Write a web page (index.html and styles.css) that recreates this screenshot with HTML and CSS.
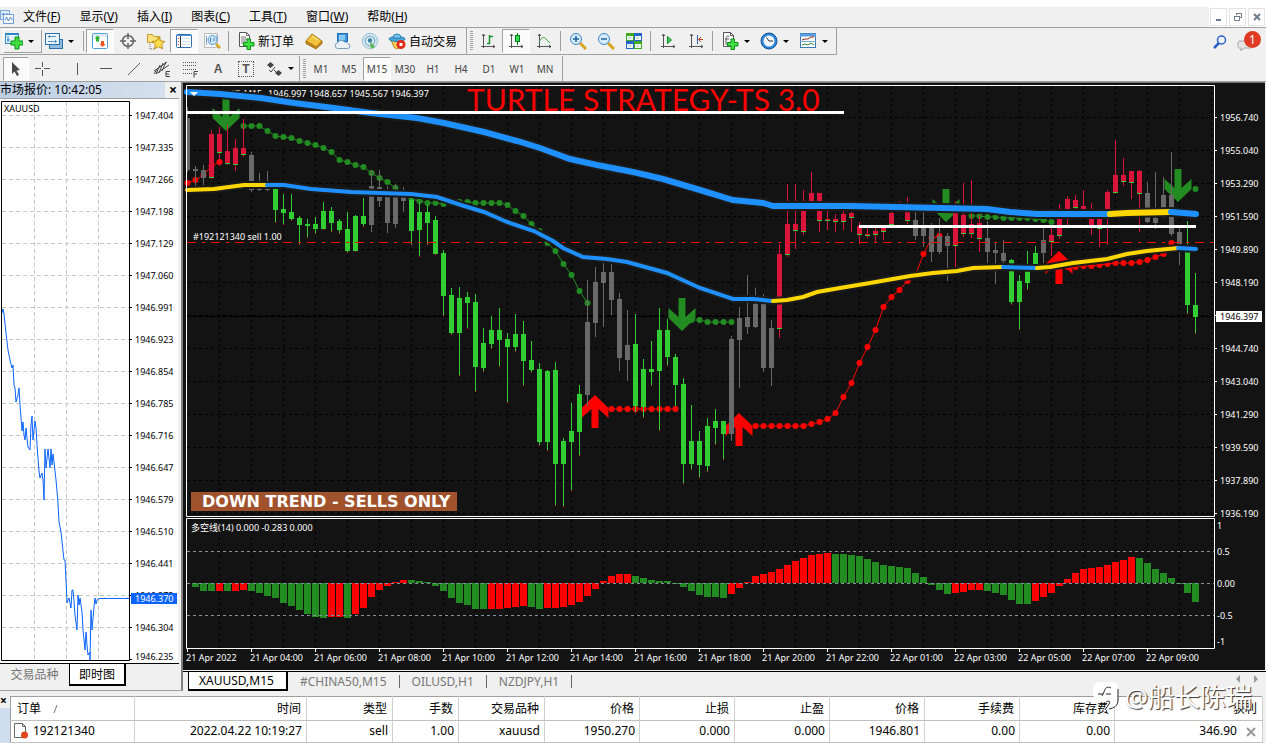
FILE: index.html
```html
<!DOCTYPE html>
<html lang="zh-CN">
  <head>
    <meta charset="utf-8">
    <meta name="viewport" content="width=device-width, initial-scale=1.0">
    <title>XAUUSD,M15</title>
    <link rel="stylesheet" href="styles.css">
  </head>

  <body>
    <header class="menubar">
      <svg class="app-icon" viewBox="0 0 14 14"><rect x="0.5" y="0.5" width="9" height="9" fill="#dbe9fb" stroke="#7fa9dc"/><path d="M2 5l1.500-2 2 3 2-3" fill="none" stroke="#5b8fd0"/><rect x="3.5" y="4.5" width="10" height="9" fill="#fff" stroke="#6f9fdc"/><path d="M5 10l1.500-3 2 4 2-4 2 3" fill="none" stroke="#4a80c8"/></svg>
      <nav class="menu">
        <button>文件(<u>F</u>)</button>
        <button>显示(<u>V</u>)</button>
        <button>插入(<u>I</u>)</button>
        <button>图表(<u>C</u>)</button>
        <button>工具(<u>T</u>)</button>
        <button>窗口(<u>W</u>)</button>
        <button>帮助(<u>H</u>)</button>
      </nav>
      <div class="window-buttons">
        <button aria-label="最小化"><svg viewBox="0 0 10 10"><path d="M2 8h5" stroke="#6d7b8c" stroke-width="2"/></svg></button>
        <button aria-label="还原"><svg viewBox="0 0 10 10"><path d="M3.500 3V1.500h5v4H7M3 1.500h6M1.500 4.500h5v4h-5zM1 4.500h6" fill="none" stroke="#6d7b8c"/></svg></button>
        <button aria-label="关闭"><svg viewBox="0 0 10 10"><path d="M2 2l6 6M8 2L2 8" stroke="#6d7b8c" stroke-width="2"/></svg></button>
      </div>
    </header>

    <div class="row">
      <div class="toolbar main-tools">
        <button class="tool drop raised" aria-label="新图表"><svg viewBox="0 0 18 18"><rect x="0.500" y="1.500" width="13" height="10" fill="#e6f2fc" stroke="#2f86c8"/><path d="M0 2.500h14M3 4v6M2 8h3" stroke="#2f86c8"/><path d="M10 5h4v4h4v4h-4v4h-4v-4H6V9h4z" fill="#3fe03f" stroke="#0a8f1a"/></svg><i></i></button>
        <button class="tool drop profiles" aria-label="配置文件"><svg viewBox="0 0 18 18"><rect x="4.500" y="7.500" width="13" height="9" fill="#8fbce0" stroke="#2c6ea6"/><rect x="0.500" y="1.500" width="14" height="11" fill="#eaf4fb" stroke="#2c6ea6"/><path d="M3 4.500h8M3 9.500h9M4.500 3v3M10.500 8v3" stroke="#5b93bf"/></svg><i></i></button>
        <span class="sep"></span>
        <button class="tool pressed" aria-label="市场报价"><svg viewBox="0 0 18 18"><rect x="1.500" y="1.500" width="15" height="15" rx="1" fill="#fff" stroke="#4f9fd8"/><path d="M2 3.500h14" stroke="#cfe4f4" stroke-width="2"/><path d="M6.500 3.500l3 3H8v3H5v-3H3.500z" fill="#2bb52b"/><path d="M11.500 15l3-3H13V9h-3v3H8.500z" fill="#f0541e"/></svg></button>
        <button class="tool" aria-label="数据窗口"><svg viewBox="0 0 18 18"><circle cx="9" cy="9" r="5.500" fill="none" stroke="#666" stroke-width="1.500"/><path d="M9 1v6M9 11v6M1 9h6M11 9h6" stroke="#666" stroke-width="1.500"/></svg></button>
        <button class="tool" aria-label="导航"><svg viewBox="0 0 18 18"><path d="M0.500 2.500h5l1.500 2h6v6H0.500z" fill="#ffe27a" stroke="#c39a2e"/><path d="M3 12v5h5" fill="none" stroke="#666" stroke-dasharray="1 1"/><path d="M11.500 5l2 4 4.300.5-3.200 3 .9 4.300-4-2.200-4 2.200.9-4.300-3.200-3 4.300-.5z" fill="#ffdf4d" stroke="#c08a12"/></svg></button>
        <button class="tool pressed" aria-label="终端"><svg viewBox="0 0 18 18"><rect x="1.500" y="2.500" width="15" height="13" rx="1" fill="#fff" stroke="#2f6fb4"/><path d="M2 3.500h14" stroke="#4f90d0"/><path d="M5.500 4v11" stroke="#333"/><path d="M7 6.500h8M7 9.500h8M7 12.500h8" stroke="#d4e3f4"/><path d="M3 6.500h1M3 9.500h1M3 12.500h1" stroke="#d33"/></svg></button>
        <button class="tool" aria-label="策略测试"><svg viewBox="0 0 18 18"><path d="M1.500 1.500h13v14h-13z" fill="#f8f8f8" stroke="#bbb"/><path d="M3.500 4v9M14 3v6" stroke="#7aa0d0"/><circle cx="9.500" cy="8" r="4.500" fill="#c8e4f7" stroke="#5a9bd0"/><path d="M7.500 6v4M11 6v3" stroke="#4a80c8"/><path d="M13 12l4 4" stroke="#d9a520" stroke-width="2.500"/></svg></button>
        <span class="sep"></span>
        <button class="tool text-tool order" aria-label="新订单"><svg viewBox="0 0 18 18"><path d="M2.500 0.500h7l3 3v11h-10z" fill="#fff" stroke="#555"/><path d="M9.500 0.500v3h3M4 5h5M4 7h7M4 9h5M4 11h4" fill="none" stroke="#777"/><path d="M10 7h3.500v3.500H17V14h-3.500v3.500H10V14H6.500v-3.500H10z" fill="#3fe03f" stroke="#0a8f1a"/></svg>新订单</button>
        <button class="tool" aria-label="MetaEditor"><svg viewBox="0 0 18 18"><path d="M7 2l10 7-6 6L1 9z" fill="#f3c33c" stroke="#a87412"/><path d="M1 9v2.500l10 5.500 6-5.500V9l-6 6z" fill="#c88a1c" stroke="#a87412"/><path d="M7 4l6 4" stroke="#fff0a8"/></svg></button>
        <button class="tool" aria-label="MQL5"><svg viewBox="0 0 18 18"><rect x="4.500" y="1.500" width="10" height="8" fill="#3b95e0" stroke="#1f6db4"/><path d="M6 3h6v5H6z" fill="#8cc8f5"/><path d="M4.500 16.500a2.800 2.800 0 010-5.500 4 4 0 017-1 3 3 0 013 1.500 2.500 2.500 0 010 5z" fill="#eaf2f9" stroke="#7d9ab8"/></svg></button>
        <button class="tool" aria-label="信号"><svg viewBox="0 0 18 18"><circle cx="9" cy="9" r="7.500" fill="#eef4f6" stroke="#a8cbdc" stroke-width="1.500"/><circle cx="9" cy="9" r="4.800" fill="#e2f0f5" stroke="#7fb2d0" stroke-width="1.500"/><circle cx="9" cy="8.500" r="2.200" fill="#3a7fa8"/><path d="M9 9l1 8 4-2z" fill="#57b84e"/></svg></button>
        <button class="tool text-tool auto" aria-label="自动交易"><svg viewBox="0 0 18 18"><path d="M3 8h11l-1 6a4 4 0 01-7 1z" fill="#f4cf55" stroke="#b98a1c"/><ellipse cx="9" cy="7" rx="8" ry="2.500" fill="#4aa5d8" stroke="#2a7fae"/><path d="M5 6a4 4 0 018 0z" fill="#7cc8ee" stroke="#2a7fae"/><circle cx="13" cy="12.500" r="4.500" fill="#e02b18"/><rect x="11.500" y="11" width="3" height="3" fill="#fff"/></svg>自动交易</button>
      </div>
      <div class="toolbar chart-tools">
        <span class="grip"></span>
        <button class="tool" aria-label="柱状图"><svg viewBox="0 0 18 18"><path d="M4.500 2v14M2 14.500h14M3 4l1.500-2L6 4M14 13l2 1.500-2 1.500" fill="none" stroke="#555"/><path d="M10.500 3v9M8 11.500h3M11 4.500h3" stroke="#16962a" stroke-width="1.500"/></svg></button>
        <button class="tool pressed" aria-label="阴阳烛"><svg viewBox="0 0 18 18"><path d="M4.500 2v14M2 14.500h14M3 4l1.500-2L6 4M14 13l2 1.500-2 1.500" fill="none" stroke="#555"/><path d="M10.500 1v12" stroke="#0c7a1e"/><rect x="8.500" y="3.500" width="4" height="6" fill="#2fe04c" stroke="#0c7a1e"/></svg></button>
        <button class="tool" aria-label="折线图"><svg viewBox="0 0 18 18"><path d="M4.500 2v14M2 14.500h14M3 4l1.500-2L6 4M14 13l2 1.500-2 1.500" fill="none" stroke="#555"/><path d="M4 10c3-5 5-6 7-3l4 4" fill="none" stroke="#38a648"/></svg></button>
        <span class="sep"></span>
        <button class="tool" aria-label="放大"><svg viewBox="0 0 18 18"><path d="M11 11l6 6" stroke="#d9a520" stroke-width="3"/><circle cx="7" cy="7" r="5.500" fill="#d5ecfb" stroke="#3d85c4"/><path d="M4 7h6M7 4v6" stroke="#22649c" stroke-width="1.500"/></svg></button>
        <button class="tool" aria-label="缩小"><svg viewBox="0 0 18 18"><path d="M11 11l6 6" stroke="#d9a520" stroke-width="3"/><circle cx="7" cy="7" r="5.500" fill="#d5ecfb" stroke="#3d85c4"/><path d="M4 7h6" stroke="#22649c" stroke-width="1.500"/></svg></button>
        <button class="tool" aria-label="平铺窗口"><svg viewBox="0 0 18 18"><path d="M1 1h8v8H1z" fill="#3faa1d"/><path d="M9 1h8v8H9z" fill="#2463cf"/><path d="M1 9h8v8H1z" fill="#2463cf"/><path d="M9 9h8v8H9z" fill="#3faa1d"/><path d="M2 4h6v4H2zM10 4h6v4h-6zM2 12h6v4H2zM10 12h6v4h-6z" fill="#f2f8ee"/><path d="M3 6h3M11 6h3M3 14h3M11 14h3" stroke="#9bc6e0"/></svg></button>
        <span class="sep"></span>
        <button class="tool" aria-label="自动滚动"><svg viewBox="0 0 18 18"><path d="M4.500 2v14M2 14.500h14M3 4l1.500-2L6 4M14 13l2 1.500-2 1.500" fill="none" stroke="#555"/><path d="M8.500 4.500v7l4-3.500z" fill="#3fd05a" stroke="#0c8a24"/></svg></button>
        <button class="tool" aria-label="图表平移"><svg viewBox="0 0 18 18"><path d="M4.500 2v14M2 14.500h14M3 4l1.500-2L6 4M14 13l2 1.500-2 1.500" fill="none" stroke="#555"/><path d="M10.500 3v9" stroke="#2563ae"/><path d="M16 7.500h-4M14 5l-2.500 2.500L14 10" fill="none" stroke="#b8411c"/></svg></button>
        <span class="sep"></span>
        <button class="tool drop" aria-label="指标"><svg viewBox="0 0 18 18"><path d="M2.500 0.500h7l3 3v11h-10z" fill="#fff" stroke="#555"/><path d="M5 8c0-5 3-5 3-3M4 7h4M5 8v5M9.500 0.500v3h3" fill="none" stroke="#555"/><path d="M10 7h3.500v3.500H17V14h-3.500v3.500H10V14H6.500v-3.500H10z" fill="#3fe03f" stroke="#0a8f1a"/></svg><i></i></button>
        <button class="tool drop" aria-label="周期"><svg viewBox="0 0 18 18"><circle cx="9" cy="9" r="8" fill="#2f86d8" stroke="#15539c"/><circle cx="9" cy="9" r="5.500" fill="#f2f8fd"/><path d="M9 9L6.500 5.500M9 9h4" stroke="#333"/></svg><i></i></button>
        <button class="tool drop" aria-label="模板"><svg viewBox="0 0 18 18"><rect x="1.500" y="1.500" width="15" height="14" fill="#fff" stroke="#3b78b8"/><path d="M1 3h16" stroke="#5a9bd8" stroke-width="3"/><path d="M1 9.500h16" stroke="#7da9d4"/><path d="M3 8l3-1 3 0 3-2h3" fill="none" stroke="#8a2a1c"/><path d="M3 13l3-1 3 1 3-2 3 2" fill="none" stroke="#2b8a34"/></svg><i></i></button>
      </div>
      <div class="status-tools">
        <button aria-label="搜索"><svg viewBox="0 0 14 14"><path d="M1 13l5-5" stroke="#2b5fc4" stroke-width="2.500"/><circle cx="8.500" cy="5" r="4" fill="#eef4fd" stroke="#2b5fc4" stroke-width="1.500"/></svg></button>
        <button class="chat" aria-label="消息"><svg viewBox="0 0 20 18"><path d="M2 8h11a1.500 1.500 0 012 1.500v4a1.500 1.500 0 01-2 1.500H7l-3 3v-3a2 2 0 01-3-1.500v-4z" fill="#e4e4e4" stroke="#aaa"/></svg><b>1</b></button>
      </div>
    </div>

    <div class="row second">
      <div class="toolbar line-tools">
        <button class="tool pressed" aria-label="光标"><svg viewBox="0 0 18 18"><path d="M5 2l8 8-3.500.5 2.500 4.500-2 1-2.500-4.500L5 14z" fill="#484848"/></svg></button>
        <button class="tool" aria-label="十字准线"><svg viewBox="0 0 18 18"><path d="M8.500 2v5M8.500 10v6M1 8.500h6M10 8.500h6" stroke="#555"/></svg></button>
        <span class="sep"></span>
        <button class="tool" aria-label="垂直线"><svg viewBox="0 0 18 18"><path d="M8.500 3v12" stroke="#555"/></svg></button>
        <button class="tool" aria-label="水平线"><svg viewBox="0 0 18 18"><path d="M3 8.500h12" stroke="#555"/></svg></button>
        <button class="tool" aria-label="趋势线"><svg viewBox="0 0 18 18"><path d="M3 15L15 3" stroke="#555"/></svg></button>
        <button class="tool" aria-label="通道"><svg viewBox="0 0 18 18"><path d="M1 11L14 2M3 14L16 5M3 14l4-9M6 13l4-10M9 11l4-9M1 14l3-5" stroke="#444"/><path d="M17 11.500h-4v5h4M13 14h3" fill="none" stroke="#444"/></svg></button>
        <button class="tool" aria-label="斐波那契"><svg viewBox="0 0 18 18"><path d="M2 2.500h14M2 5.500h14M2 9.500h14M2 13.500h9" stroke="#555" stroke-dasharray="1 1"/><path d="M17 11.500h-4v6M13 14h3" fill="none" stroke="#444"/></svg></button>
        <button class="tool letter" aria-label="文字"><b>A</b></button>
        <button class="tool letter boxed" aria-label="文字标签"><b>T</b></button>
        <button class="tool drop" aria-label="箭头"><svg viewBox="0 0 18 18"><path d="M2 5l3.500-3L9 5 5.500 8zM10 13l3.500-3 3.500 3-3.500 3z" fill="#444"/><path d="M4 10l2 2 4-5M9 10l2 2" fill="none" stroke="#444"/></svg><i></i></button>
      </div>
      <div class="toolbar periods">
        <span class="grip"></span>
        <button class="tool">M1</button>
        <button class="tool">M5</button>
        <button class="tool pressed">M15</button>
        <button class="tool">M30</button>
        <button class="tool">H1</button>
        <button class="tool">H4</button>
        <button class="tool">D1</button>
        <button class="tool">W1</button>
        <button class="tool">MN</button>
      </div>
    </div>

    <main>
      <section class="quotes">
        <div class="quotes-title"><span>市场报价: 10:42:05</span><button aria-label="关闭">×</button></div>
        <svg id="tick-chart" viewBox="0 99 178 564"></svg>
        <div class="tabs">
          <button>交易品种</button>
          <button class="active">即时图</button>
        </div>
      </section>
      <section class="chart">
        <svg id="price-chart" viewBox="183 82 1082 588" preserveAspectRatio="none"></svg>
        <div class="tabs">
          <button class="active">XAUUSD,M15</button>
          <button>#CHINA50,M15</button>
          <button>OILUSD,H1</button>
          <button>NZDJPY,H1</button>
          <div class="scroll"><i class="left"></i><i class="right"></i></div>
        </div>
      </section>
    </main>

    <section class="terminal">
      <div class="terminal-side"><button aria-label="关闭">×</button></div>
      <table>
        <colgroup>
          <col class="c-order"><col class="c-time"><col class="c-type"><col class="c-lots"><col class="c-type"><col class="c-price"><col class="c-price"><col class="c-price"><col class="c-price"><col class="c-price"><col class="c-price"><col>
        </colgroup>
        <thead>
          <tr><th>订单<svg class="sort" viewBox="0 0 5 8"><path d="M1 8l3-8" stroke="#777"/></svg></th><th>时间</th><th>类型</th><th>手数</th><th>交易品种</th><th>价格</th><th>止损</th><th>止盈</th><th>价格</th><th>手续费</th><th>库存费</th><th>获利</th></tr>
        </thead>
        <tbody>
          <tr>
            <td><svg viewBox="0 0 14 16"><path d="M0.500 0.500h8l3 3v11h-11z" fill="#fff" stroke="#666"/><path d="M8.500 0.500v3h3" fill="none" stroke="#666"/><circle cx="10.500" cy="12" r="3.500" fill="#e2441c"/></svg>192121340</td>
            <td>2022.04.22 10:19:27</td><td>sell</td><td>1.00</td><td>xauusd</td><td>1950.270</td><td>0.000</td><td>0.000</td><td>1946.801</td><td>0.00</td><td>0.00</td>
            <td>346.90 <button aria-label="平仓"><svg viewBox="0 0 10 10"><path d="M1 1l8 8M9 1L1 9" stroke="#999" stroke-width="2"/></svg></button></td>
          </tr>
        </tbody>
      </table>
      <div class="watermark"><svg viewBox="0 0 28 32"><path d="M8 1h11c5 0 7 3 7 8v10c0 6-4 9-10 9l-4 3v-3l4-7c1-2-1-4-3-3l-6 1c-4 0-6-3-6-7V9c0-5 3-8 7-8z" fill="#fff"/><path d="M19 7c-4-2-6 0-7 4l-2 4M6 13h5M14 13h5M26 8v11c0 6-4 8-9 9M14 21c2-1 5-2 3 2l-4 6" fill="none" stroke="#222"/></svg>@船长陈瑞</div>
    </section>

    <script src="chart.js"></script>
  </body>
</html>
```

FILE: styles.css
```css
* {
margin: 0;
padding: 0;
box-sizing: border-box;
}

body {
display: flex;
flex-direction: column;
min-height: 100vh;
padding-top: 7px;
overflow: hidden;
color: #000;
font-family: "Noto Sans", "Noto Sans CJK SC", sans-serif;
font-size: 12px;
background: #fff;
}

button {
border: 0;
color: inherit;
font: inherit;
background: none;
}

svg {
display: block;
}

/* menu */
.menubar {
display: flex;
height: 21px;
align-items: center;
border-bottom: 1px solid #a0a0a0;
background: #f0f0f0;
}

.app-icon {
width: 14px;
height: 14px;
margin-right: 9px;
}

.menu {
display: flex;
flex: 1;
gap: 19px;
line-height: 20px;
}

.window-buttons {
display: flex;
gap: 2px;
height: 20px;
padding: 1px;
background: #fff;
}

.window-buttons button {
display: grid;
place-items: center;
width: 17px;
border: 1px solid #e3e3e3;
}

.window-buttons svg {
width: 10px;
height: 10px;
}

/* toolbars */
.row {
display: flex;
height: 27px;
background: #f0f0f0;
}

.row.second {
padding-top: 1px;
border-bottom: 1px solid #a0a0a0;
}

.toolbar {
display: flex;
align-items: center;
padding: 1px 3px;
border-right: 1px solid #a0a0a0;
}

.row:not(.second) .toolbar {
border-bottom: 1px solid #a0a0a0;
}

.tool {
display: flex;
flex: none;
align-items: center;
justify-content: center;
width: 28px;
height: 24px;
border: 1px solid transparent;
}

.tool svg {
width: 18px;
height: 18px;
}

.tool.pressed {
border-color: #a0a0a0 #fff #fff #a0a0a0;
background: #fafafa;
}

.tool.raised {
border-color: #fff #a0a0a0 #a0a0a0 #fff;
}

.tool.drop {
width: 39px;
gap: 5px;
}

.tool.drop.raised,
.tool.profiles {
justify-content: flex-start;
padding-left: 1px;
}

.tool.drop.profiles {
padding-left: 2px;
}

.tool i {
border: 3px solid transparent;
border-top-color: #000;
border-bottom: 0;
}

.tool.text-tool {
gap: 3px;
justify-content: flex-end;
}

.tool.order {
width: 69px;
padding-right: 5px;
}

.tool.auto {
width: 79px;
padding-right: 5px;
}

.chart-tools .sep {
margin: 0 3px 0 2px;
}

.sep {
width: 1px;
height: 20px;
margin: 0 2px;
background: #a0a0a0;
}

.grip {
width: 3px;
height: 20px;
margin-right: 1px;
background: repeating-linear-gradient(#a0a0a0 0 1px, #f0f0f0 1px 2px);
}

.line-tools {
width: 300px;
}

.line-tools .pressed {
width: 26px;
}

.line-tools .sep {
margin: 0 4px 0 3px;
}

.letter b {
color: #555;
font: bold 12px "Liberation Sans", sans-serif;
}

.letter.boxed b {
padding: 0 3px;
border: 1px dotted #555;
}

.periods .tool {
color: #444;
font-size: 10px;
}

.status-tools {
display: flex;
flex: 1;
justify-content: flex-end;
align-items: center;
gap: 10px;
padding-right: 5px;
}

.status-tools svg {
width: 14px;
height: 14px;
}

.status-tools .chat {
position: relative;
width: 24px;
height: 22px;
}

.status-tools .chat svg {
width: 20px;
height: 20px;
}

.chat b {
position: absolute;
top: 0;
right: 0;
width: 17px;
height: 17px;
border-radius: 50%;
color: #fff;
font-size: 12px;
font-weight: 400;
line-height: 17px;
background: #e03a22;
}

/* workspace */
main {
display: flex;
height: 614px;
background: #f0f0f0;
}

.quotes {
width: 183px;
height: 609px;
border-right: 2px solid #808080;
border-bottom: 1px solid #a0a0a0;
}

.quotes-title {
display: flex;
justify-content: space-between;
height: 17px;
margin-right: 2px;
border-bottom: 1px solid #a0a0a0;
line-height: 16px;
background: linear-gradient(90deg, #bccfe4, #d5e0ee 165px, #f0f0f0 165px);
}

.quotes-title button {
width: 12px;
font-size: 14px;
font-weight: 700;
line-height: 16px;
}

#tick-chart {
width: 178px;
height: 564px;
background: #fff;
}

.chart {
flex: 1;
min-width: 0;
}

#price-chart {
width: calc(100% - 1px);
height: 588px;
background: #131313;
}

svg text {
font-family: "Noto Sans", "Noto Sans CJK SC", sans-serif;
font-size: 9px;
}

#price-chart text {
fill: #fff;
}

#price-chart .title {
fill: #f00;
font-family: Lato, sans-serif;
font-size: 30px;
}

#price-chart .trend {
font-family: "DejaVu Sans", sans-serif;
font-size: 16px;
font-weight: 700;
}

#price-chart .on-white {
fill: #000;
}

#tick-chart .on-blue {
fill: #fff;
}

.tabs {
display: flex;
color: #777;
}

.tabs button {
white-space: nowrap;
}

.quotes .tabs {
height: 22px;
margin-right: 2px;
border-top: 1px solid #000;
line-height: 19px;
}

.quotes .tabs button {
width: 69px;
}

.quotes .tabs .active {
width: 57px;
height: 22px;
border: 1px solid #000;
border-top: 0;
border-right-width: 2px;
border-bottom-width: 2px;
color: #000;
background: #fff;
}

.chart .tabs {
height: 20px;
margin-top: 1px;
padding-left: 5px;
border-top: 1px solid #000;
line-height: 18px;
}

.chart .tabs button {
position: relative;
padding: 0 13px 0 12px;
}

.chart .tabs button:not(.active)::after {
content: "";
position: absolute;
top: 3px;
right: 0;
width: 1px;
height: 13px;
background: #666;
}

.chart .tabs .active {
height: 19px;
padding: 0 12px 0 10px;
border: 1px solid #000;
border-top: 0;
border-right-width: 2px;
border-bottom-width: 2px;
color: #000;
background: #fff;
}

.scroll {
display: flex;
gap: 14px;
margin: 3px 8px 0 auto;
}

.scroll i {
height: 8px;
border: 4px solid transparent;
}

.scroll .left {
border-right-color: #999;
border-left: 0;
}

.scroll .right {
border-left-color: #999;
border-right: 0;
}

/* terminal */
.terminal {
position: relative;
display: flex;
flex: 1;
background: #f0f0f0;
}

.terminal-side {
width: 10px;
background: linear-gradient(#f0f0f0 12px, #cfdeee 12px);
}

.terminal-side button {
display: block;
width: 6px;
font-size: 12px;
font-weight: 700;
line-height: 9px;
}

table {
flex: 1;
width: 0;
margin-right: 3px;
table-layout: fixed;
border-collapse: collapse;
border-top: 1px solid #a0a0a0;
border-left: 1px solid #a0a0a0;
background: #fff;
}

th,
td {
overflow: hidden;
padding-bottom: 2px;
text-align: right;
font-weight: 400;
white-space: nowrap;
border-right: 1px solid #d0d0d0;
border-bottom: 1px solid #c0c0c0;
}

th {
height: 24px;
padding-right: 5px;
}

td {
height: 21px;
padding-right: 4px;
}

th:first-child {
padding-left: 6px;
text-align: left;
}

th .sort {
display: inline-block;
width: 5px;
height: 8px;
margin-left: 12px;
}

td:first-child {
padding-left: 3px;
text-align: left;
}

td svg {
display: inline-block;
width: 14px;
height: 16px;
margin-right: 5px;
vertical-align: middle;
}

td button svg {
width: 10px;
height: 10px;
margin: 0 2px 0 6px;
}

.c-order { width: 124px; }
.c-time { width: 172px; }
.c-type { width: 86px; }
.c-lots { width: 66px; }
.c-price { width: 95px; }

.watermark {
position: absolute;
top: -16px;
right: 14px;
display: flex;
align-items: center;
gap: 5px;
color: #fff;
font-size: 26px;
line-height: 34px;
text-shadow: 1px 1px 1px #333;
}

.watermark svg {
width: 28px;
height: 32px;
}
```

FILE: chart.js
```js
const RED = "#dc143c", LIME = "#32cd32", GRAY = "#696969", GREEN = "#228b22", BLUE = "#1e90ff", GOLD = "#ffd700";
const xAt = (i) => 187 + 8 * i;

const el = (tag, attrs, text) => {
    const list = Object.entries(attrs).map(([k, v]) => `${k}="${v}"`).join(" ");
    return `<${tag} ${list}>${text || ""}</${tag}>`;
};
const rect = (x, y, width, height, fill) => el("rect", { x, y, width, height, fill });
const line = (x1, y1, x2, y2, stroke, extra = {}) => el("line", { x1, y1, x2, y2, stroke, ...extra });
const text = (x, y, str, cls = "label") => el("text", { x, y, class: cls }, str);

// color, high, body top, body bottom, low
const candles = `
x 107 118 170 172|x 166 169 171 186|x 165 170 178 185|r 130 134 178 179|r 127 134 153 166|r 125 151 164 165|r 139 148 165 171|r 119 148 155 157
x 152 155 190 192|x 173 188 190 191|x 171 188 190 191|g 189 189 210 223|g 194 209 213 225|g 194 212 219 221|g 216 218 225 245|g 219 224 225 238
g 217 224 229 234|g 202 211 229 230|g 207 211 223 232|g 219 221 230 234|g 212 229 251 253|g 215 216 251 252|g 198 216 224 227|x 170 186 225 232
x 170 187 201 207|x 186 197 223 233|x 184 195 224 228|x 187 190 201 212|g 198 200 231 245|g 203 212 230 257|g 205 212 223 245|g 216 220 254 255
g 250 253 296 316|g 288 295 333 335|g 287 298 333 376|g 292 297 303 329|g 294 302 367 392|g 328 343 368 372|g 316 330 344 349|g 308 330 340 367
g 333 339 347 403|g 314 334 347 352|g 321 334 361 386|g 341 360 370 373|g 363 369 442 446|g 370 371 442 451|g 362 370 464 506|g 438 441 464 507
g 403 431 442 491|g 385 394 432 456|x 280 322 395 406|x 267 282 323 337|x 263 272 283 327|x 264 272 300 315|x 293 299 358 371|x 310 345 360 381
g 314 344 406 413|g 359 369 407 418|g 341 369 372 386|g 308 330 371 431|g 319 330 357 366|g 354 357 385 407|g 378 384 464 484|g 405 441 464 470
g 431 441 465 478|g 418 426 466 472|g 409 421 428 445|g 421 421 434 460|x 336 339 434 441|x 307 318 340 388|x 275 317 327 334|x 288 304 327 328
x 294 304 368 372|x 320 328 368 386|r 244 254 329 338|r 184 224 255 257|r 184 224 231 249|r 190 207 232 235|r 172 193 205 206|r 193 193 221 232
r 210 219 221 230|r 214 219 222 232|r 211 214 222 230|r 212 213 218 232|r 222 226 235 244|r 227 234 236 238|r 227 231 235 243|r 226 228 232 240
r 212 213 225 226|r 201 205 207 208|r 197 211 221 224|x 212 220 236 240|x 212 228 236 247|x 223 228 252 262|x 218 236 252 254|x 233 236 246 281
r 201 213 246 267|r 183 215 234 237|r 180 224 234 238|r 215 223 239 252|x 221 238 252 263|x 242 250 253 284|x 240 253 261 263|g 259 260 302 305
g 275 281 302 330|g 251 270 283 290|g 246 253 264 265|x 228 240 253 263|r 228 235 242 256|r 204 219 236 239|r 196 199 210 225|r 195 200 208 209
r 190 206 210 211|r 203 219 226 235|r 218 219 229 247|r 190 192 210 245|r 140 175 193 194|r 158 175 182 186|r 171 171 183 199|r 170 171 194 232
x 182 193 222 223|x 172 218 223 229|x 177 195 208 218|x 152 195 234 236|x 228 232 244 265|g 221 249 305 314|g 273 305 317 334`.trim().split(/[|\n]/).map((c) => c.split(" "));

// first candle index of each run, then the dot heights
const greenDots = [
    [7, 126, 126, 126, 131, 136, 137, 138, 141, 143, 145, 148, 152, 160, 162, 165, 167, 173, 178, 182, 188, 194, 199, 201, 203, 203, 204, 203, 202, 202, 203, 203, 203, 203, 205, 211, 216, 224, 231, 243, 251, 264, 275, 291, 303],
    [63, 320, 320, 322, 322, 322, 322],
    [98, 216, 216, 217, 217, 218, 218, 218, 218, 219, 220, 222],
    [126, 189]
];
const redDots = [
    [0, 183, 180, 175, 166, 162],
    [53, 409, 409, 409, 409, 409, 409, 409, 409, 409],
    [71, 426, 426, 426, 426, 426, 426, 426, 424, 422, 419, 413, 397, 383, 363, 347, 330, 307, 297, 290, 281, 275, 254, 238, 236],
    [110, 267, 267, 266, 266, 265, 264, 263, 263, 263, 262, 260, 257, 254, 243]
];

const slowLine = [
    [BLUE, "187,92 220,94 261,98 294,103 334,108 371,113 417,118 444,123 484,132 517,141 540,148 570,159 597,165 633,172 663,179 700,190 733,200 763,203 773,206 850,206 987,209 1010,212 1037,214 1110,214"],
    [GOLD, "1110,214 1127,213 1170,212"],
    [BLUE, "1171,212 1196,214"]
];
const fastLine = [
    [GOLD, "187,190 214,189 244,185 267,185"],
    [BLUE, "267,185 284,185 311,189 351,192 411,194 437,197 461,205 484,212 507,222 534,231 553,241 563,248 583,257 607,259 627,262 667,273 700,288 733,299 753,299 773,301"],
    [GOLD, "773,301 787,300 803,297 817,292 840,288 870,283 910,276 933,273 957,271 973,268 1003,267"],
    [BLUE, "1003,267 1037,268"],
    [GOLD, "1037,268 1050,267 1073,263 1107,259 1127,254 1147,251 1178,248"],
    [BLUE, "1178,248 1196,249"]
];

// histogram: positive goes up, "r" marks a red bar
const bars = "-4 -8 -8 -8r -8 -8r -7r -8 -10 -13 -15 -20 -23 -27 -31 -34 -35 -34r -34r -35 -31r -25r -14r -7r -3r 1r 3r 3 2 1 -3 -8 -15 -20 -22 -26 -26 -26r -26r -25r -24r -23r -24 -26 -25r -25r -24r -22r -19r -13r -6r 2r 7r 9r 9r 7 5 3 2 2 -1 -4 -8 -12 -14 -14 -15 -11r -5r 1r 7r 9r 11r 14r 18r 22r 25r 28r 29r 30r 29 29 28 27 24 21 18 17 16 15 10 6 -2 -7 -11 -10r -9r -7r -7r -8 -10 -12 -17 -21 -21 -18r -14r -10r -3r 4r 10r 14r 15r 16r 18r 21r 23r 26r 25 20 14 10 5 -1 -10 -19".split(" ");

const drawRuns = (runs, color) => runs.map(([start, ...ys]) => {
    const pts = ys.map((y, i) => [xAt(start + i) + 0.5, y]);
    return el("polyline", { points: pts.join(" "), fill: "none", stroke: color }) +
        pts.map(([cx, cy]) => el("circle", { cx, cy, r: 3, fill: color })).join("");
}).join("");

const drawLine = (parts, width, halo) => {
    const all = parts.map((p) => p[1]).join(" ");
    return el("polyline", { points: all, fill: "none", stroke: "#1b1b1b", "stroke-width": halo }) +
        parts.map(([stroke, points]) => el("polyline", { points, fill: "none", stroke, "stroke-width": width, "stroke-linecap": "round" })).join("");
};

const arrow = (x, y, dir, fill) => el("path", {
    d: "M0 0l-13.500-13v-10l10 9v-19h7v19l10-9v10z",
    fill,
    transform: `translate(${x} ${y}) scale(1 ${dir})`
});

const drawPriceChart = () => {
    let out = line(183, 82.5, 1265, 82.5, "#777");
    const grid = { "stroke-dasharray": "3 3" };
    for (let x = 219.5; x < 1214; x += 32) out += line(x, 86, x, 516, "#000", grid) + line(x, 519, x, 648, "#000", grid);
    for (let y = 117.5; y < 516; y += 33) out += line(187, y, 1214, y, "#000", grid);
    out += line(187, 316.5, 1214, 316.5, "#000");

    out += [[226, 131], [682, 331], [946, 222], [1178, 202]].map(([x, y]) => arrow(x, y, 1, GREEN)).join("");
    out += [[595, 395], [739, 413], [1059, 251]].map(([x, y]) => arrow(x, y, -1, "#f00")).join("");
    out += drawRuns(greenDots, GREEN) + drawRuns(redDots, "#f00");

    candles.forEach(([type, high, top, bottom, low], i) => {
        const fill = { r: RED, g: LIME, x: GRAY }[type];
        const x = xAt(i), left = Math.max(x - 2, 187);
        out += rect(x, high, 1, low - high, fill);
        out += rect(left, top, x + 3 - left, Math.max(bottom - top, 2), fill);
        if (type === "r") out += rect(x - 2, bottom - 1, 5, 1, LIME);
        if (type === "g") out += rect(x, low - 1, 1, 1, RED);
    });

    out += line(187, 242.5, 1214, 242.5, "#f00", { "stroke-dasharray": "9 6 3 6" });
    out += text(206, 97, "XAUUSD,M15");
    out += text(268, 97, "1946.997 1948.657 1945.567 1946.397");
    out += drawLine(slowLine, 6, 10) + drawLine(fastLine, 4, 8);
    out += `<path d="M190 92h8l-4 4z" fill="#fff"/>`;
    out += rect(187, 111, 657, 3, "#fff") + rect(859, 225, 337, 3, "#fff");
    out += text(467, 111, "TURTLE STRATEGY-TS 3.0", "title");
    out += text(193, 240, "#192121340 sell 1.00");
    out += rect(191, 492, 266, 19, "#a0522d") + text(202, 507, "DOWN TREND - SELLS ONLY", "trend");

    bars.forEach((b, i) => {
        const h = parseInt(b);
        out += rect(xAt(i + 1) - 3, h > 0 ? 583 - h : 583, 7, Math.abs(h), b.endsWith("r") ? "#f00" : GREEN);
    });
    [551.5, 583.5, 615.5].forEach((y) => out += line(187, y, 1214, y, "#8290a0", { "stroke-dasharray": "3 3" }));
    out += text(191, 531, "多空线(14) 0.000 -0.283 0.000");

    // frames
    out += `<path d="M186.500 516.500v-431h1028v431zM186.500 648.500v-130h1028v130z" fill="none" stroke="#fff"/>`;
    ["1956.740", "1955.040", "1953.290", "1951.590", "1949.890", "1948.190", "", "1944.740", "1943.040", "1941.290", "1939.590", "1937.890", "1936.190"].forEach((p, i) => {
        out += line(1215, 117.5 + 33 * i, 1217, 117.5 + 33 * i, "#fff") + text(1220, 121 + 33 * i, p);
    });
    out += rect(1216, 311, 46, 11, "#fff") + text(1220, 320, "1946.397", "on-white");
    [["1", 529], ["0.5", 555], ["0.00", 587], ["-0.5", 619], ["-1", 645]].forEach(([t, y]) => out += text(1217, y, t));

    ["21 Apr 2022", "21 Apr 04:00", "21 Apr 06:00", "21 Apr 08:00", "21 Apr 10:00", "21 Apr 12:00", "21 Apr 14:00", "21 Apr 16:00", "21 Apr 18:00", "21 Apr 20:00", "21 Apr 22:00", "22 Apr 01:00", "22 Apr 03:00", "22 Apr 05:00", "22 Apr 07:00", "22 Apr 09:00"].forEach((t, i) => {
        out += line(187.5 + 64 * i, 649, 187.5 + 64 * i, 652, "#fff") + text(186 + 64 * i, 661, t);
    });
    document.querySelector("#price-chart").innerHTML = out;
};

const drawTickChart = () => {
    let out = "";
    const grid = { "stroke-dasharray": "4 3" };
    [34.5, 66.5, 98.5].forEach((x) => out += line(x, 102, x, 660, "#c8c8c8", grid));
    ["1947.404", "1947.335", "1947.266", "1947.198", "1947.129", "1947.060", "1946.991", "1946.923", "1946.854", "1946.785", "1946.716", "1946.647", "1946.579", "1946.510", "1946.441", "1946.372", "1946.304"].forEach((p, i) => {
        const y = 115.5 + 32 * i;
        out += line(2, y, 129, y, "#c8c8c8", grid) + line(130, y, 132, y, "#000") + text(135, y + 3.5, p);
    });
    out += line(130, 659.5, 132, 659.5, "#000") + text(135, 660, "1946.235");
    out += el("polyline", {
        points: "2,313 3,309 4,314 6,333 8,350 10,360 12,368 13,365 14,385 15,388 16,402 18,395 19,388 20,405 21,418 22,431 23,422 24,435 25,440 26,428 27,438 28,447 30,450 31,425 32,416 33,440 34,430 35,421 36,428 37,445 38,458 39,471 40,478 42,473 43,480 44,500 45,449 46,468 48,449 50,468 51,449 52,465 53,454 54,462 56,480 58,503 59,522 61,532 64,560 65,560 66,580 67,603 69,598 71,608 72,590 73,590 74,601 75,615 77,630 78,595 79,605 80,598 82,612 83,630 85,650 86,632 87,645 88,655 90,652 90,660 91,610 92,630 94,607 95,598 96,604 97,600 99,598.500 129,598.500",
        fill: "none", stroke: "#0a64ff"
    });
    out += `<path d="M1.500 660.500v-559h128v559z" fill="none" stroke="#000"/>`;
    out += text(4, 112, "XAUUSD");
    out += rect(131, 593, 46, 11, "#0a64ff") + text(135, 602, "1946.370", "on-blue");
    document.querySelector("#tick-chart").innerHTML = out;
};

drawPriceChart();
drawTickChart();
```
